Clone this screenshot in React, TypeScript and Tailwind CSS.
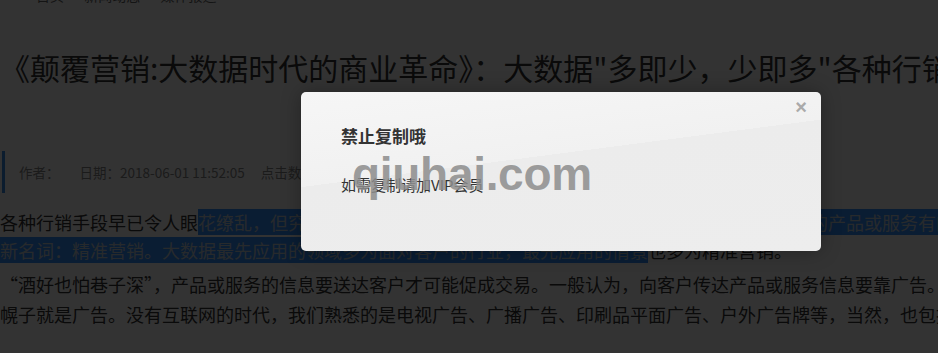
import React from 'react';

const font = "font-['Noto_Sans_CJK_SC','Microsoft_YaHei',sans-serif]";

export default function App() {
    return (
        <div className={`relative h-[353px] w-[938px] overflow-hidden bg-white ${font}`}>
            {/* page content (behind the mask) */}
            <div className="w-[1200px] -mt-[15px]">
                <div className="flex items-center gap-2 pl-[10px] text-[14px] leading-[20px] text-[#666]">
                    <span className="inline-block h-[8px] w-[8px] bg-[#888]"></span>
                    <span className="ml-[10px]">首页</span>
                    <span>›</span>
                    <span>新闻动态</span>
                    <span>›</span>
                    <span>媒体报道</span>
                </div>

                <h1 className="mt-[42px] whitespace-nowrap text-[30px] leading-[40px] font-normal text-[#333]">
                    《颠覆营销:大数据时代的商业革命》：大数据"多即少，少即多"各种行销手段
                </h1>

                <div className="mt-[64px] ml-[2px] flex h-[42px] items-center gap-[16px] border-l-[3px] border-[#3a8ee6] pl-[14px] text-[13.5px] text-[#888]">
                    <span className="mr-[4px]">作者：</span>
                    <span>日期：2018-06-01 11:52:05</span>
                    <span>点击数：1024</span>
                </div>

                <p className="mt-[15px] whitespace-nowrap text-[18px] leading-[28px] text-[#333]">
                    各种行销手段早已令人眼
                    <span className="bg-[#3390ff] text-[#c4d0dc]">花缭乱，但究其本质，无非都是为了让更多的潜在客户去了解并最终接受企业的产品或服务有的</span>
                    <br />
                    <span className="bg-[#3390ff] text-[#c4d0dc]">新名词：精准营销。大数据最先应用的领域多为面对客户的行业，最先应用的情景</span>
                    也多为精准营销。
                </p>

                <p className="mt-[5px] whitespace-nowrap text-[18px] leading-[30px] text-[#333]">
                    “酒好也怕巷子深”，产品或服务的信息要送达客户才可能促成交易。一般认为，向客户传达产品或服务信息要靠广告。从前酒馆门前挑起的
                    <br />
                    幌子就是广告。没有互联网的时代，我们熟悉的是电视广告、广播广告、印刷品平面广告、户外广告牌等，当然，也包括宣传单。
                </p>
            </div>

            {/* mask */}
            <div className="absolute inset-0 bg-black/80"></div>

            {/* dialog */}
            <div className="absolute left-[301px] top-[92px] h-[159px] w-[520px] overflow-hidden rounded-[5px] bg-[linear-gradient(172.6deg,#f6f6f6_0%,#f1f1f1_42%,#ececec_42%,#ededed_100%)] shadow-[0_0_20px_rgba(0,0,0,0.3)]">
                <span className="absolute right-[14px] top-[4px] text-[20px] leading-[22px] font-bold text-[#aaa] font-['Liberation_Sans',sans-serif]">×</span>
                <div className="px-[40px] pt-[32px]">
                    <div className="text-[17px] leading-[24px] font-bold text-[#333]">禁止复制哦</div>
                    <div className="mt-[26px] text-[15px] leading-[22px] text-[#333]">如需复制请加VIP会员</div>
                </div>
                {/* site watermark */}
                <span className="absolute left-[51px] top-[54px] text-[46px] leading-[56px] font-bold tracking-[-0.3px] text-[#8c8c8c]/85 font-['Liberation_Sans',sans-serif]">qiuhai.com</span>
            </div>
        </div>
    );
}
